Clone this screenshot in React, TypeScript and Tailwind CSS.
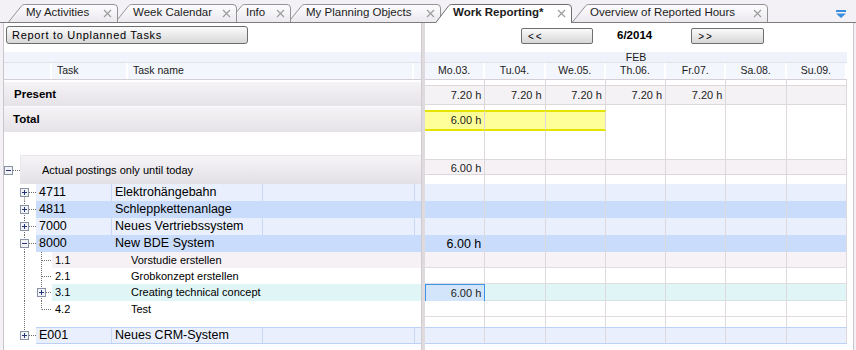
import React from 'react';

const days = ['Mo.03.', 'Tu.04.', 'We.05.', 'Th.06.', 'Fr.07.', 'Sa.08.', 'Su.09.'];

type TabDef = { label: string; width: number; cls: string; active?: boolean };

const tabs: TabDef[] = [
  { label: 'My Activities', width: 110, cls: 'w-[110px] ml-[8px] z-[6]' },
  { label: 'Week Calendar', width: 122, cls: 'w-[122px] -ml-[3px] z-[5]' },
  { label: 'Info', width: 63, cls: 'w-[63px] -ml-[9px] z-[4]' },
  { label: 'My Planning Objects', width: 153, cls: 'w-[153px] -ml-[3px] z-[3]' },
  { label: 'Work Reporting*', width: 137, cls: 'w-[137px] -ml-[6px] z-[10]', active: true },
  { label: 'Overview of Reported Hours', width: 196, cls: 'w-[196px] ml-0 z-[2]' },
];

const DOT = { stroke: '#6f6f6f', strokeDasharray: '1 1' };

function CloseX() {
  return (
    <svg width="9" height="9" viewBox="0 0 9 9" className="shrink-0">
      <path d="M1 1L8 8M8 1L1 8" stroke="#9c9c9c" strokeWidth="1.2" />
    </svg>
  );
}

function TabItem({ tab, idx }: { tab: TabDef; idx: number }) {
  const W = tab.width;
  const H = tab.active ? 19 : 18;
  const d = `M0.5 ${H} L13.5 2 Q14.5 0.5 16.5 0.5 L${W - 4} 0.5 Q${W - 0.5} 0.5 ${W - 0.5} 4 L${W - 0.5} ${H}`;
  return (
    <div className={`relative flex items-center shrink-0 ${tab.active ? 'h-[19px] -mb-px' : 'h-[18px]'} ${tab.cls}`}>
      <svg className="absolute inset-0" width={W} height={H}>
        <defs>
          <linearGradient id={`tg${idx}`} x1="0" y1="0" x2="0" y2="1">
            <stop offset="0" stopColor={tab.active ? '#ffffff' : '#fdfcfe'} />
            <stop offset="1" stopColor={tab.active ? '#ffffff' : '#ebe9ee'} />
          </linearGradient>
        </defs>
        <path d={d} fill={`url(#tg${idx})`} stroke={tab.active ? '#6e6e6e' : '#939393'} />
      </svg>
      <div className={`relative flex items-center w-full pl-[18px] pr-[6px] ${tab.active ? 'pb-px' : ''}`}>
        <span className={`text-[11.5px] text-[#1c1c1c] whitespace-nowrap ${tab.active ? 'font-bold' : ''}`}>{tab.label}</span>
        <span className="ml-auto flex"><CloseX /></span>
      </div>
    </div>
  );
}

function Box({ x, c, minus }: { x: number; c: number; minus?: boolean }) {
  return (
    <g>
      <rect x={x + 0.5} y={c - 4} width="8" height="8" fill="#f3f3f6" stroke="#8792a6" />
      <path d={`M${x + 2} ${c} H${x + 7}`} stroke="#22387a" />
      {!minus && <path d={`M${x + 4.5} ${c - 2.5} V${c + 2.5}`} stroke="#22387a" />}
    </g>
  );
}

function TopTree({ h, first, last, minus }: { h: number; first?: boolean; last?: boolean; minus?: boolean }) {
  const c = Math.floor(h / 2) + 0.5;
  return (
    <svg width="32" height={h} className="shrink-0">
      <path d={`M20.5 ${first ? c : 0} V${last ? c : h}`} {...DOT} />
      <path d={`M25 ${c} H32`} {...DOT} />
      <Box x={16} c={c} minus={minus} />
    </svg>
  );
}

function SubTree({ h, last, box }: { h: number; last?: boolean; box?: boolean }) {
  const c = Math.floor(h / 2) + 0.5;
  return (
    <svg width="48" height={h} className="shrink-0">
      <path d={`M20.5 0 V${h}`} {...DOT} />
      <path d={`M37.5 0 V${last ? c : h}`} {...DOT} />
      {box ? (
        <>
          <path d={`M42 ${c} H48`} {...DOT} />
          <Box x={33} c={c} />
        </>
      ) : (
        <path d={`M38 ${c} H48`} {...DOT} />
      )}
    </svg>
  );
}

function TopRow({ code, name, light, first, last, minus }: { code: string; name: string; light?: boolean; first?: boolean; last?: boolean; minus?: boolean }) {
  const bg = light ? 'bg-[#e9effc]' : 'bg-[#cadcfb]';
  const sep = light ? 'border-r border-[#c9d8f6]' : '';
  return (
    <div className="flex h-[17px]">
      <TopTree h={17} first={first} last={last} minus={minus} />
      <div className={`flex-1 flex text-[12.5px] text-black ${bg} ${last ? 'border-y border-[#bdd0f5]' : ''}`}>
        <div className={`w-[76px] pl-[3px] flex items-center ${sep}`}>{code}</div>
        <div className={`w-[151px] pl-[3px] flex items-center ${sep}`}>{name}</div>
        <div className={`w-[152px] ${sep}`} />
        <div className="flex-1" />
      </div>
    </div>
  );
}

function SubRow({ code, name, h, bg, last, box }: { code: string; name: string; h: number; bg: string; last?: boolean; box?: boolean }) {
  return (
    <div className={`flex ${h === 17 ? 'h-[17px]' : 'h-[16px]'}`}>
      <SubTree h={h} last={last} box={box} />
      <div className={`flex-1 flex text-[11px] text-black ${bg}`}>
        <div className="w-[76px] pl-[3px] flex items-center">{code}</div>
        <div className="flex-1 pl-[3px] flex items-center">{name}</div>
      </div>
    </div>
  );
}

function DayRow({ row, cell, content }: { row: string; cell?: (i: number) => string; content?: (i: number) => React.ReactNode }) {
  return (
    <div className="flex">
      <div className={`grid grid-cols-7 w-[422px] ${row}`}>
        {days.map((d, i) => (
          <div key={d} className={`flex items-center justify-end pr-[3px] ${cell ? cell(i) : 'border-r border-[#dcd8dc]'}`}>
            {content ? content(i) : null}
          </div>
        ))}
      </div>
      <div className="flex-1" />
    </div>
  );
}

function NavButton({ label, w }: { label: string; w: string }) {
  return (
    <div className={`${w} h-[16px] border border-[#6f6f6f] rounded-[2px] bg-gradient-to-b from-[#fafafa] to-[#d7d7d7] flex items-center pl-[6px] text-[10px] tracking-[2px] text-black`}>
      {label}
    </div>
  );
}

function LeftPane() {
  return (
    <div className="w-[417px] flex flex-col shrink-0">
      <div className="h-[29px] pt-[3px] pl-[2px]">
        <div className="w-[242px] h-[18px] border border-[#6c6c6c] rounded-[3px] bg-gradient-to-b from-[#fcfcfc] to-[#d8d8d8] flex items-center pl-[5px] text-[11px] tracking-[0.7px] text-black">
          Report to Unplanned Tasks
        </div>
      </div>
      <div className="h-[11px] bg-[#f1f4fc] border-b border-[#e3e2ea]" />
      <div className="h-[17px] bg-[#f4f6fd] border-b border-[#d4d0d6] flex text-[10.5px] text-[#1a1a1a]">
        <div className="w-[48px] border-r-2 border-white" />
        <div className="w-[76px] pl-[5px] border-r-2 border-white flex items-center">Task</div>
        <div className="w-[286px] pl-[5px] border-r-2 border-white flex items-center">Task name</div>
        <div className="flex-1" />
      </div>
      <div className="h-[2px]" />
      <div className="h-[25px] bg-gradient-to-b from-[#f5f3f6] to-[#e6e3e8] border-b border-[#faf9fb] flex items-center pl-[10px] pt-px text-[11.5px] font-bold text-black">
        Present
      </div>
      <div className="h-[25px] bg-gradient-to-b from-[#f5f3f6] to-[#e6e3e8] flex items-center pl-[9px] pt-px text-[11.5px] font-bold text-black">
        Total
      </div>
      <div className="h-[23px]" />
      <div className="h-[29px] flex">
        <svg width="16" height="29" className="shrink-0">
          <path d="M9 15.5 H16" {...DOT} />
          <Box x={0} c={15.5} minus />
        </svg>
        <div className="flex-1 bg-gradient-to-b from-[#f6f4f7] to-[#e3e0e5] border-l border-t border-[#e9e7eb] flex items-center pl-[21px] text-[11px] text-black">
          Actual postings only until today
        </div>
      </div>
      <TopRow code="4711" name="Elektrohängebahn" light first />
      <TopRow code="4811" name="Schleppkettenanlage" />
      <TopRow code="7000" name="Neues Vertriebssystem" light />
      <TopRow code="8000" name="New BDE System" minus />
      <SubRow code="1.1" name="Vorstudie erstellen" h={16} bg="bg-[#f6f1f5]" />
      <SubRow code="2.1" name="Grobkonzept erstellen" h={16} bg="bg-white" />
      <SubRow code="3.1" name="Creating technical concept" h={17} bg="bg-[#dff5f6]" box />
      <SubRow code="4.2" name="Test" h={16} bg="bg-white" last />
      <div className="h-[10px] flex">
        <svg width="32" height="10" className="shrink-0">
          <path d="M20.5 0 V10" {...DOT} />
        </svg>
      </div>
      <TopRow code="E001" name="Neues CRM-System" light last />
    </div>
  );
}

function RightPane() {
  const val = (t: string) => <span className="text-[11px] text-[#222]">{t}</span>;
  return (
    <div className="flex-1 flex flex-col">
      <div className="h-[29px] pt-[5px] pl-[96px] flex items-start">
        <NavButton label="<<" w="w-[72px]" />
        <div className="ml-[24px] h-[16px] flex items-center text-[11.5px] font-bold text-black">6/2014</div>
        <div className="ml-[39px]"><NavButton label=">>" w="w-[73px]" /></div>
      </div>
      <div className="flex">
        <div className="w-[422px] h-[11px] bg-[#eff2fb] border-b border-[#e3e2ea] flex items-center justify-center text-[10.5px] text-[#1a1a1a] leading-none">
          FEB
        </div>
      </div>
      <div className="flex">
        <div className="grid grid-cols-7 w-[422px] h-[17px] bg-[#f4f6fd] border-b border-[#d4d0d6] text-[10.5px] text-[#1a1a1a]">
          {days.map(d => (
            <div key={d} className="flex items-center justify-center border-r-2 border-white">{d}</div>
          ))}
        </div>
      </div>
      <DayRow row="h-[5px]" />
      <DayRow
        row="h-[20px] bg-[#f5f2f5] border-y border-[#dcd8dc]"
        content={i => (i < 5 ? val('7.20 h') : null)}
      />
      <DayRow row="h-[5px]" />
      <DayRow
        row="h-[21px]"
        cell={i =>
          i < 3
            ? 'bg-[#ffff99] border-y-2 border-y-[#e4e400] border-r border-r-[#dcd8dc]'
            : 'border-r border-[#dcd8dc]'
        }
        content={i => (i === 0 ? val('6.00 h') : null)}
      />
      <DayRow row="h-[28px]" />
      <DayRow
        row="h-[16px] bg-[#f5f1f4] border-y border-[#dcd8dc]"
        content={i => (i === 0 ? val('6.00 h') : null)}
      />
      <DayRow row="h-[9px]" />
      <DayRow row="h-[17px] bg-[#e9effc]" />
      <DayRow row="h-[17px] bg-[#cadcfb]" />
      <DayRow row="h-[17px] bg-[#e9effc]" />
      <DayRow
        row="h-[17px] bg-[#cadcfb]"
        content={i => (i === 0 ? <span className="text-[12.5px] text-black">6.00 h</span> : null)}
      />
      <DayRow row="h-[16px] bg-[#f6f2f5] border-b border-[#e0dce0]" />
      <DayRow row="h-[16px] bg-white border-b border-[#e0dce0]" />
      <DayRow
        row="h-[17px] bg-[#dff5f6] border-b border-[#d4e4e6]"
        cell={i =>
          i === 0
            ? 'border border-[#3d95e6] bg-[#d3e5fb]'
            : 'border-r border-[#dcd8dc]'
        }
        content={i => (i === 0 ? val('6.00 h') : null)}
      />
      <DayRow row="h-[16px] bg-white border-b border-[#e0dce0]" />
      <DayRow row="h-[10px] bg-white" />
      <DayRow row="h-[17px] bg-[#e9effc] border-y border-[#bdd0f5]" />
    </div>
  );
}

export default function App() {
  return (
    <div className="w-[856px] h-[350px] bg-[#f3f1f5] flex flex-col overflow-hidden font-['Liberation_Sans',Arial,sans-serif]">
      <div className="h-[23px] flex items-end border-b border-[#7d7d7d] shrink-0">
        {tabs.map((t, i) => (
          <TabItem key={t.label} tab={t} idx={i} />
        ))}
        <svg width="10" height="8" viewBox="0 0 10 8" className="ml-auto mr-[10px] self-start mt-[10px]">
          <rect x="0" y="0" width="10" height="2" fill="#3a8ddc" />
          <path d="M0 3.5 H10 L5 8 Z" fill="#3a8ddc" />
        </svg>
      </div>
      <div className="flex-1 flex bg-white ml-[3px] mr-[2px] border-l border-r border-[#c9c5c9]">
        <LeftPane />
        <div className="w-[4px] shrink-0 bg-[#dedade] border-l border-[#cfcbcf]" />
        <RightPane />
      </div>
    </div>
  );
}
